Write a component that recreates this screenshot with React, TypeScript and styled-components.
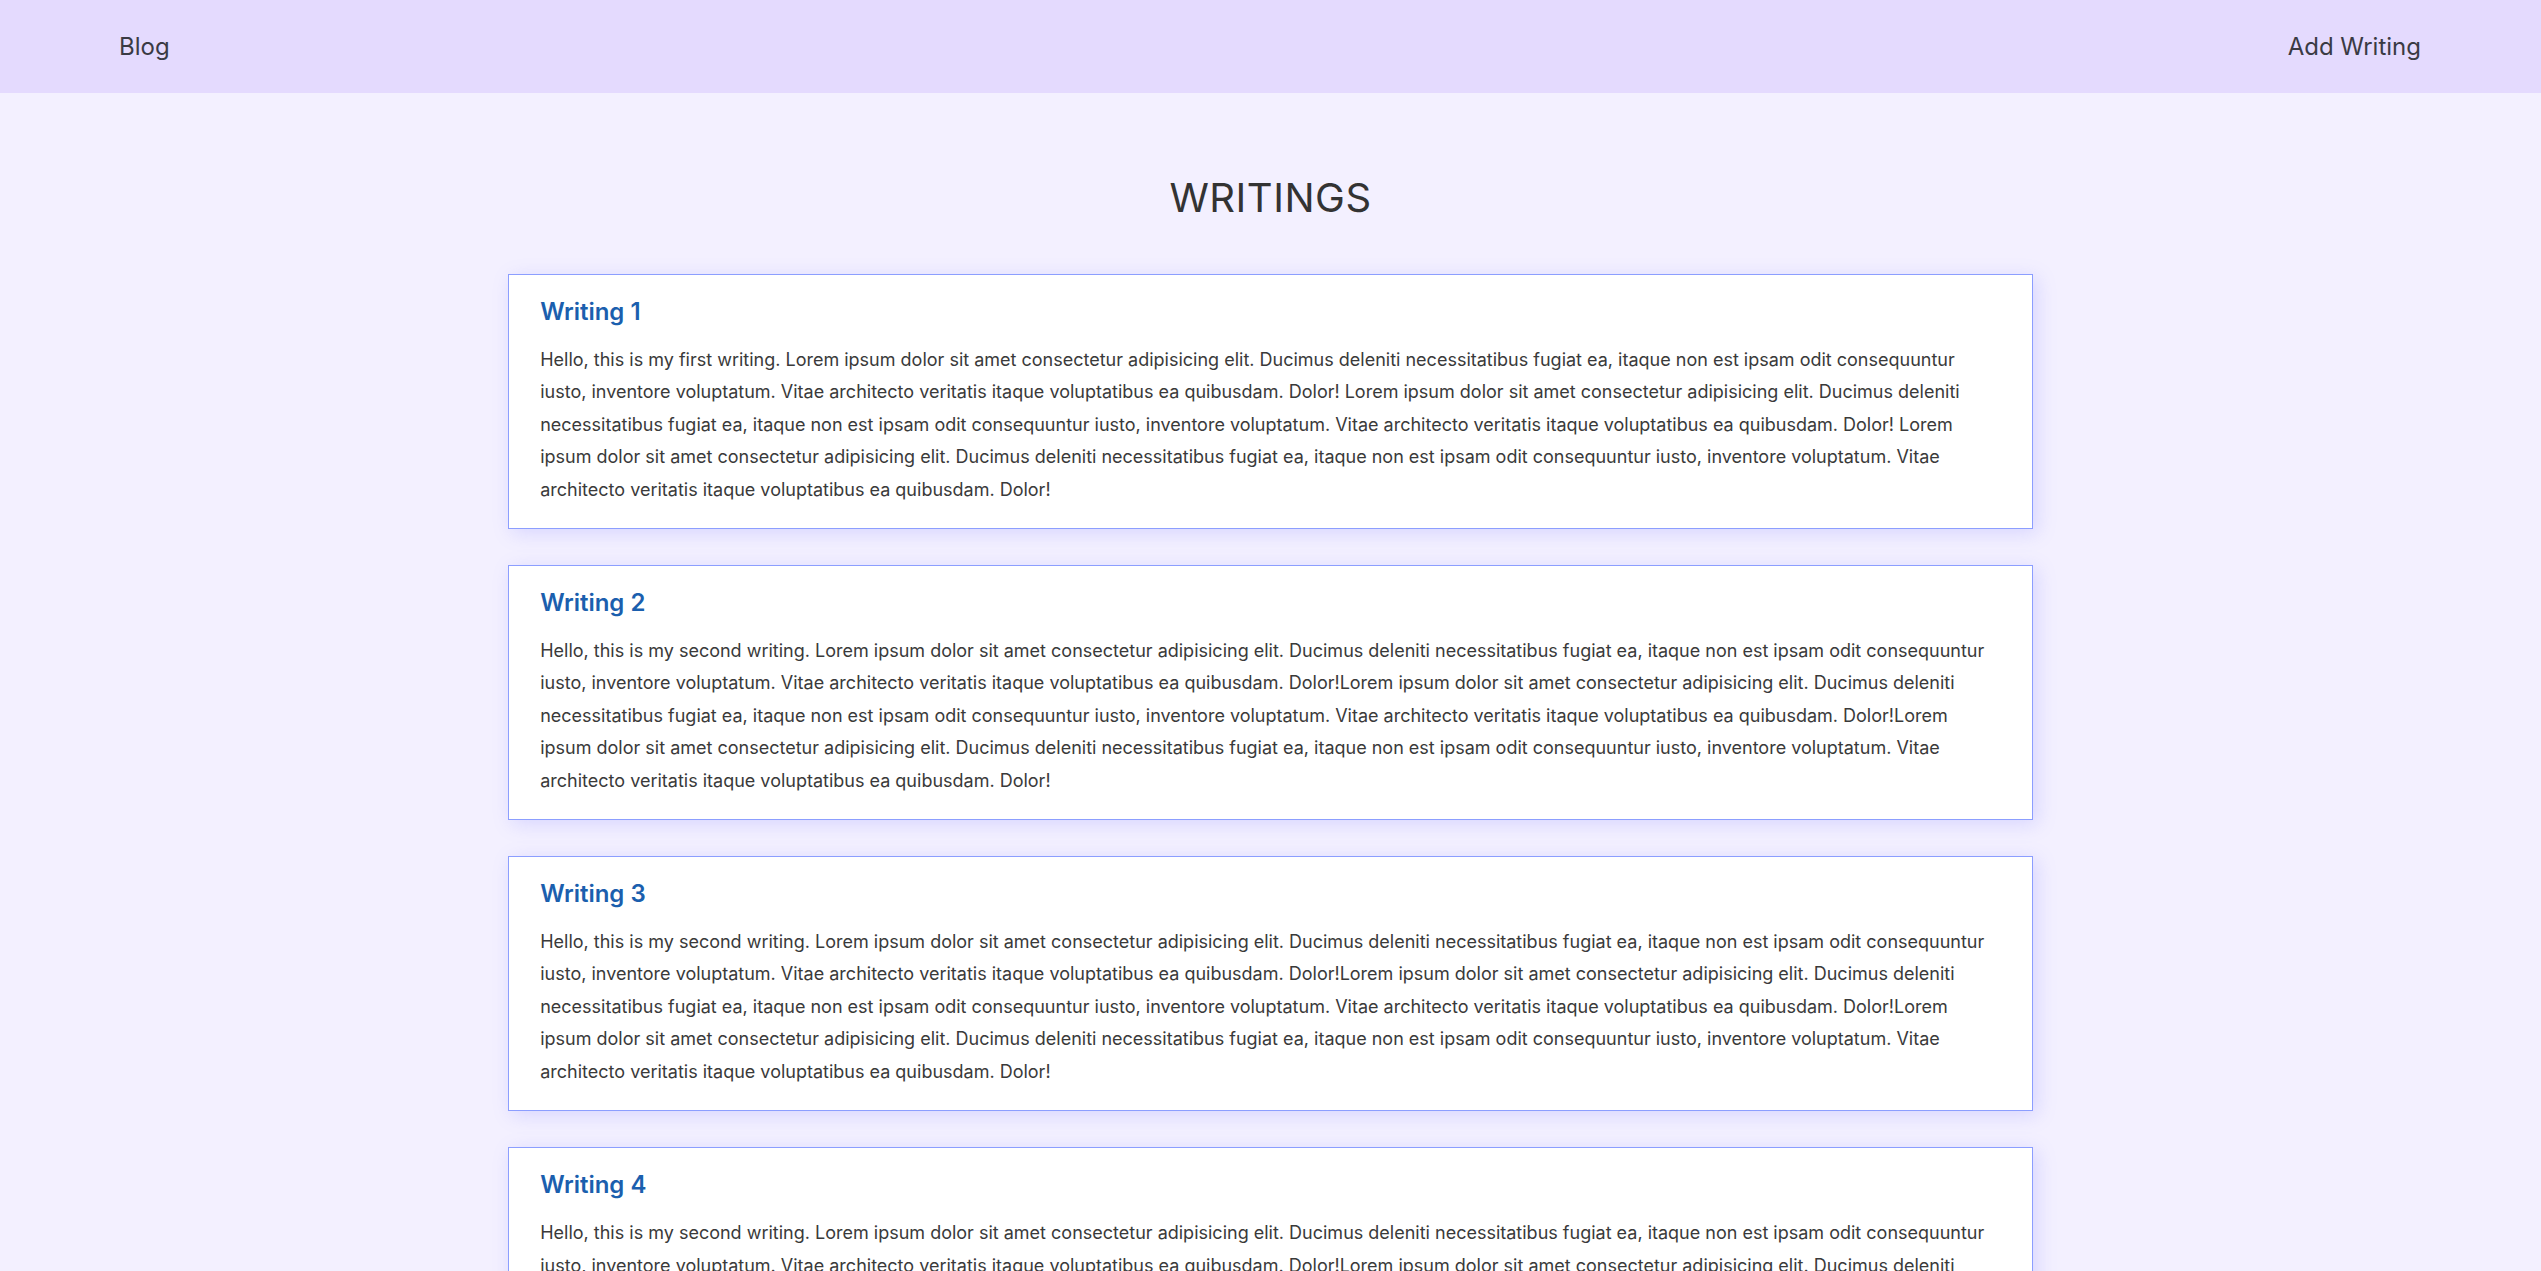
import React from "react";
import styled, { createGlobalStyle } from "styled-components";

const GlobalStyle = createGlobalStyle`
  * { box-sizing: border-box; }
  html, body { margin: 0; padding: 0; }
  body {
    background: #f3f0ff;
    font-family: Inter, "Noto Sans", sans-serif;
    color: #333;
  }
`;

const Header = styled.header`
  height: 93px;
  background: #e4dafe;
  display: flex;
  align-items: center;
  justify-content: space-between;
  padding: 0 120px 0 119px;
`;

const NavLink = styled.a`
  font-size: 24px;
  font-weight: 400;
  color: #3a3a44;
  text-decoration: none;
  cursor: pointer;
`;

const Main = styled.main`
  display: flex;
  flex-direction: column;
  align-items: center;
  padding: 80px 0 60px;
`;

const PageTitle = styled.h1`
  margin: 0 0 52px;
  font-size: 40px;
  font-weight: 400;
  color: #333;
  letter-spacing: 0.5px;
`;

const List = styled.div`
  width: 60%;
  display: flex;
  flex-direction: column;
  gap: 36.5px;
`;

const Card = styled.article`
  background: #fff;
  border: 1px solid #8c9eff;
  box-shadow: 4px 4px 18px rgba(120, 120, 255, 0.22);
  padding: 22px 31px 21.5px;
  display: flex;
  flex-direction: column;
  gap: 18px;
`;

const CardTitle = styled.h2`
  margin: 0;
  font-size: 24px;
  font-weight: 600;
  color: #1b5fae;
`;

const CardBody = styled.p`
  margin: 0;
  font-size: 18px;
  line-height: 32.4px;
  color: #3a3a3a;
`;

const chunk =
  "Lorem ipsum dolor sit amet consectetur adipisicing elit. Ducimus deleniti necessitatibus fugiat ea, itaque non est ipsam odit consequuntur iusto, inventore voluptatum. Vitae architecto veritatis itaque voluptatibus ea quibusdam. Dolor!";

const first = `Hello, this is my first writing. ${chunk} ${chunk} ${chunk}`;
const second = `Hello, this is my second writing. ${chunk}${chunk}${chunk}`;

const writings = [
  { title: "Writing 1", body: first },
  { title: "Writing 2", body: second },
  { title: "Writing 3", body: second },
  { title: "Writing 4", body: second },
  { title: "Writing 5", body: second },
];

export default function App() {
  return (
    <>
      <GlobalStyle />
      <Header>
        <NavLink>Blog</NavLink>
        <NavLink>Add Writing</NavLink>
      </Header>
      <Main>
        <PageTitle>WRITINGS</PageTitle>
        <List>
          {writings.map((w) => (
            <Card key={w.title}>
              <CardTitle>{w.title}</CardTitle>
              <CardBody>{w.body}</CardBody>
            </Card>
          ))}
        </List>
      </Main>
    </>
  );
}
